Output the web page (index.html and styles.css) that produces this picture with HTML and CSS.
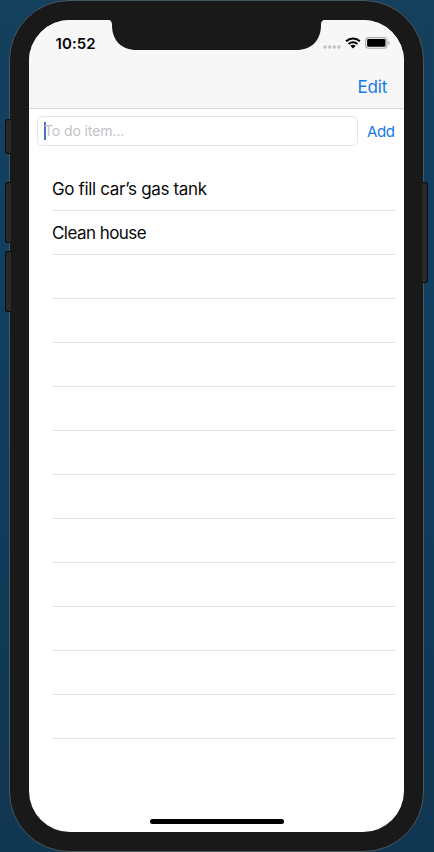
FILE: index.html
```html
<!DOCTYPE html>
<html lang="en">
<head>
<meta charset="utf-8">
<title>To do</title>
<link rel="stylesheet" href="styles.css">
</head>
<body>
<div class="phone">
  <span class="key mute"></span>
  <span class="key volume-up"></span>
  <span class="key volume-down"></span>
  <span class="key power"></span>
  <main class="screen">
    <svg class="notch" width="217" height="30" viewBox="0 0 217 30" aria-hidden="true"><path d="M0 0C3 0 4 2 4 5C4 20 13 30 29 30H188C204 30 213 20 213 5C213 2 214 0 217 0Z"/></svg>
    <header class="top">
      <div class="status">
        <span class="time">10:52</span>
        <div class="signals">
          <svg class="dots" width="18" height="4" viewBox="0 0 18 4"><circle cx="2" cy="2" r="1.7"/><circle cx="6.6" cy="2" r="1.7"/><circle cx="11.2" cy="2" r="1.7"/><circle cx="15.8" cy="2" r="1.7"/></svg>
          <svg class="wifi" width="16" height="12" viewBox="0 0 16 12"><path class="arc" d="M1.1 4.3C5 .5 11 .5 14.9 4.3M3.6 7C6.1 4.7 9.9 4.7 12.4 7"/><path d="M5.3 8.7Q8 6.6 10.7 8.7L8 11.5Z"/></svg>
          <svg class="battery" width="25" height="12" viewBox="0 0 25 12"><rect class="shell" x=".6" y=".6" width="21.4" height="10.6" rx="3"/><rect x="2.1" y="2.1" width="18.4" height="7.6" rx="1.4"/><path class="tip" d="M23.2 4V8Q24.6 7.4 24.6 6T23.2 4Z"/></svg>
        </div>
      </div>
      <nav class="nav"><span class="edit">Edit</span></nav>
    </header>
    <section class="entry">
      <div class="field"><span class="caret"></span><span class="hint">To do item...</span></div>
      <span class="add">Add</span>
    </section>
    <ul class="list">
      <li><span>Go fill car’s gas tank</span></li>
      <li><span class="second">Clean house</span></li>
      <li></li><li></li><li></li><li></li><li></li><li></li><li></li><li></li><li></li><li></li><li></li>
    </ul>
    <div class="home"></div>
  </main>
</div>
</body>
</html>
```
FILE: styles.css
```css
* { box-sizing: border-box; }
body {
  margin: 0;
  height: 852px;
  overflow: hidden;
  padding-left: 9px;
  background: linear-gradient(#14405d, #103f61 35%, #113651);
  font-family: Inter, "Liberation Sans", sans-serif;
  color: #080808;
}
.phone {
  position: relative;
  width: 415px;
  height: 852px;
  padding: 19px;
  border: 1px solid #485861;
  border-radius: 60px;
  background: #191919;
}
.key {
  position: absolute;
  width: 6px;
  background: #292929;
  border: 1px solid #090b0c;
  border-right: 0;
  border-radius: 3px 0 0 3px;
  left: -5px;
}
.mute { top: 118px; height: 35px; }
.volume-up { top: 181px; height: 61px; }
.volume-down { top: 250px; height: 61px; }
.power {
  left: auto;
  right: -5px;
  top: 181px;
  height: 101px;
  border-right: 1px solid #090b0c;
  border-left: 0;
  border-radius: 0 3px 3px 0;
}
.screen {
  position: relative;
  display: flex;
  flex-direction: column;
  width: 375px;
  height: 812px;
  border-radius: 41px;
  overflow: hidden;
  background: #fff;
}
.notch { position: absolute; top: 0; left: 79px; fill: #191919; }
.top {
  height: 89px;
  background: #f7f7f7;
  border-bottom: 1px solid #dadada;
}
.status {
  height: 44px;
  padding: 3px 14px 0 26.5px;
  display: flex;
  justify-content: space-between;
  align-items: center;
}
.time { font-size: 15px; font-weight: 600; letter-spacing: .1px; }
.signals { display: flex; align-items: center; gap: 4px; padding-bottom: 1px; }
.dots { fill: #c1c1c1; margin-top: 8px; }
.arc { fill: none; stroke: #000; stroke-width: 2; }
.shell { fill: none; stroke: #aaa; stroke-width: 1.1; }
.tip { fill: #aaa; }
.nav {
  height: 45px;
  display: flex;
  align-items: center;
  justify-content: flex-end;
  padding-right: 17px;
  font-size: 17px;
  letter-spacing: -.2px;
}
.edit, .add { color: #1479e6; }
.entry {
  height: 41px;
  padding: 7px 9.5px 0 8px;
  display: flex;
  justify-content: space-between;
}
.field {
  width: 321px;
  height: 30px;
  padding: 0 0 1px 6px;
  display: flex;
  align-items: center;
  border: 1px solid #e5e5e5;
  border-radius: 5px;
}
.caret { width: 2px; height: 18px; margin-right: -2px; background: #4870cc; }
.hint { font-size: 14px; color: #c2c2c5; letter-spacing: -.1px; }
.add { font-size: 15px; line-height: 31px; letter-spacing: -.4px; }
.list {
  list-style: none;
  margin: 17px 8px 0 23px;
  padding: 0;
}
.list li {
  height: 44px;
  display: flex;
  align-items: center;
  border-bottom: 1px solid #e4e4e4;
  font-size: 17px;
  letter-spacing: -.35px;
}
.list .second { letter-spacing: -.55px; }
.home {
  width: 134px;
  height: 5px;
  margin: auto auto 8px;
  border-radius: 3px;
  background: #000;
}
```
